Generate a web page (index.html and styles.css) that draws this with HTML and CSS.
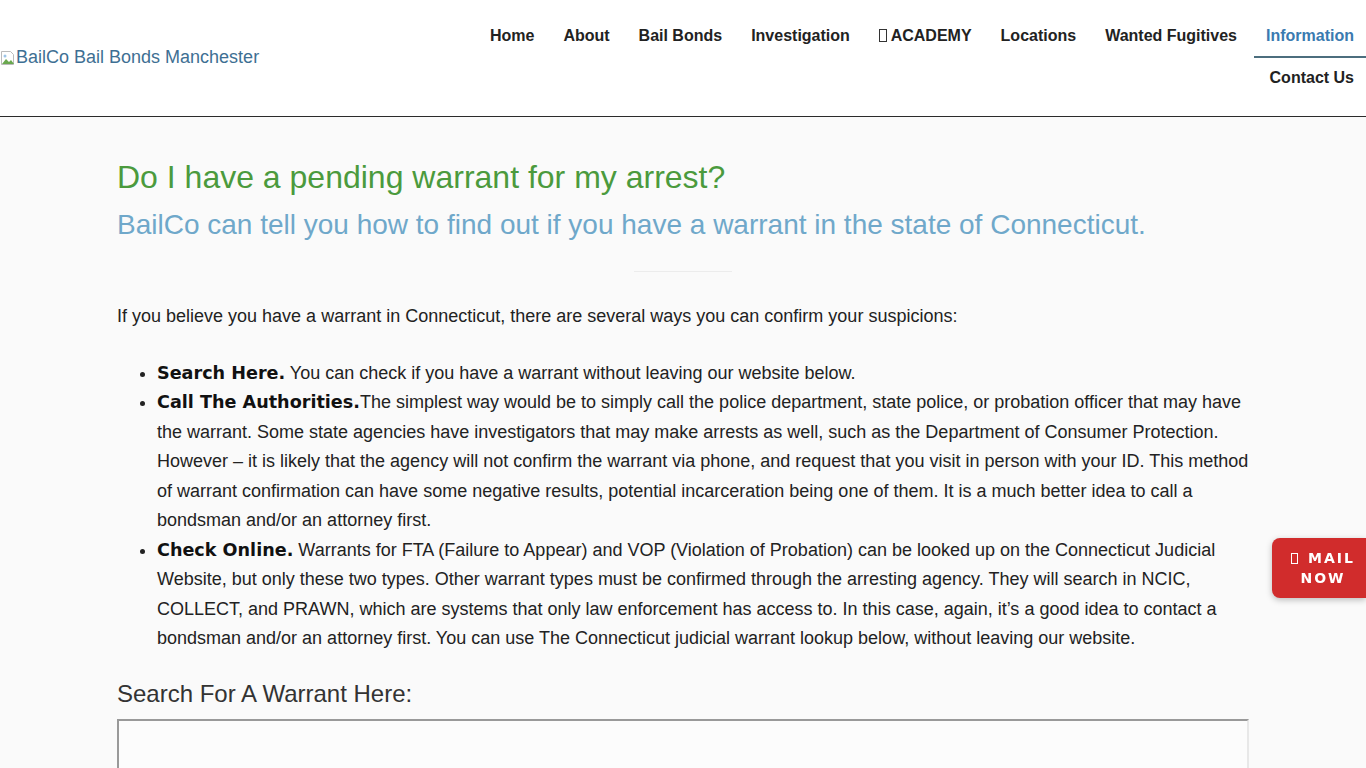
FILE: index.html
```html
<!DOCTYPE html>
<html lang="en">
<head>
<meta charset="utf-8">
<title>Do I have a pending warrant for my arrest? - BailCo</title>
<link rel="stylesheet" href="styles.css">
</head>
<body>
<header class="site-header">
  <a class="logo" href="#">
    <span class="broken-img"><svg width="16" height="16" viewBox="0 0 16 16"><path d="M1.5 1.5h9l3 3v10h-12z" fill="#fff" stroke="#bbb"/><path d="M2 14l4-5 3 3 2-2 3 4z" fill="#6aa84f"/><circle cx="5" cy="6" r="1.5" fill="#9ec5e8"/></svg></span><span class="logo-alt">BailCo Bail Bonds Manchester</span>
  </a>
  <nav class="main-nav">
    <a class="nav-item" href="#">Home</a>
    <a class="nav-item" href="#">About</a>
    <a class="nav-item" href="#">Bail Bonds</a>
    <a class="nav-item" href="#">Investigation</a>
    <a class="nav-item" href="#"><span class="tofu"></span> ACADEMY</a>
    <a class="nav-item" href="#">Locations</a>
    <a class="nav-item" href="#">Wanted Fugitives</a>
    <a class="nav-item active" href="#">Information</a>
    <a class="nav-item" href="#">Contact Us</a>
  </nav>
</header>
<main class="content">
  <h1 class="title">Do I have a pending warrant for my arrest?</h1>
  <h2 class="subtitle">BailCo can tell you how to find out if you have a warrant in the state of Connecticut.</h2>
  <hr class="divider">
  <p class="intro">If you believe you have a warrant in Connecticut, there are several ways you can confirm your suspicions:</p>
  <ul class="ways">
    <li><strong>Search Here.</strong> You can check if you have a warrant without leaving our website below.</li>
    <li><strong>Call The Authorities.</strong>The simplest way would be to simply call the police department, state police, or probation officer that may have the warrant. Some state agencies have investigators that may make arrests as well, such as the Department of Consumer Protection. However – it is likely that the agency will not confirm the warrant via phone, and request that you visit in person with your ID. This method of warrant confirmation can have some negative results, potential incarceration being one of them. It is a much better idea to call a bondsman and/or an attorney first.</li>
    <li><strong>Check Online.</strong> Warrants for FTA (Failure to Appear) and VOP (Violation of Probation) can be looked up on the Connecticut Judicial Website, but only these two types. Other warrant types must be confirmed through the arresting agency. They will search in NCIC, COLLECT, and PRAWN, which are systems that only law enforcement has access to. In this case, again, it’s a good idea to contact a bondsman and/or an attorney first. You can use The Connecticut judicial warrant lookup below, without leaving our website.</li>
  </ul>
  <h3 class="search-title">Search For A Warrant Here:</h3>
  <div class="frame"></div>
</main>
<a class="mail-now" href="#"><span class="tofu tofu-white"></span>MAIL<br>NOW</a>
</body>
</html>
```
FILE: styles.css
```css
* { box-sizing: border-box; }
html, body { margin: 0; padding: 0; }
body {
  background: #fafafa;
  font-family: "Liberation Sans", Arial, sans-serif;
  color: #222;
  overflow: hidden;
}
a { text-decoration: none; }

.site-header {
  background: #fff;
  height: 117px;
  border-bottom: 1px solid #2b2b2b;
  display: flex;
  justify-content: space-between;
  align-items: flex-start;
}
.logo {
  align-self: center;
  display: flex;
  align-items: flex-end;
  color: #3e6f93;
  font-size: 18px;
  line-height: 20px;
  margin-top: -2px;
}
.broken-img { display: inline-flex; width: 16px; height: 16px; margin-bottom: 1px; }

.main-nav {
  margin-top: 14px;
  width: 900px;
  display: flex;
  flex-wrap: wrap;
  justify-content: flex-end;
  column-gap: 5px;
}
.nav-item {
  display: block;
  padding: 0 12px;
  height: 42px;
  line-height: 44px;
  font-size: 16px;
  font-weight: bold;
  color: #222;
  white-space: nowrap;
}
.nav-item.active {
  color: #3a7ab0;
  border-bottom: 2px solid #4c6e7e;
  height: 44px;
  margin-bottom: -2px;
}
.tofu {
  display: inline-block;
  width: 8px;
  height: 13px;
  border: 1px solid #333;
  vertical-align: -1px;
}
.tofu-white {
  border-color: #fff;
  width: 7px;
  height: 11px;
  margin-right: 10px;
}

.content {
  width: 1132px;
  margin: 0 auto;
  padding-top: 40px;
}
.title {
  margin: 0;
  font-weight: normal;
  font-size: 32px;
  line-height: 40px;
  color: #4b9a3d;
}
.subtitle {
  margin: 10px 0 0;
  font-weight: normal;
  font-size: 28px;
  line-height: 36px;
  color: #6fa8ca;
}
.divider {
  width: 98px;
  margin: 28px auto 0;
  border: 0;
  border-top: 1px solid #ececec;
  height: 0;
}
.intro {
  margin: 30px 0 0;
  font-size: 18px;
  line-height: 29.5px;
}
.ways {
  margin: 27px -4px 0 0;
  padding-left: 40px;
  font-size: 18px;
  line-height: 29.5px;
}
.ways strong {
  font-family: "DejaVu Sans", Verdana, sans-serif;
  font-size: 17.6px;
  font-weight: bold;
  color: #111;
}
.search-title {
  margin: 24px 0 0;
  font-weight: normal;
  font-size: 24px;
  line-height: 31px;
  color: #333;
}
.frame {
  margin-top: 10px;
  height: 120px;
  border: 2px solid #999;
  border-right-color: #e8e8e8;
  border-bottom-color: #e8e8e8;
  background: #fcfcfc;
}

.mail-now {
  position: fixed;
  right: 0;
  top: 538px;
  width: 94px;
  height: 60px;
  background: #d12c2c;
  border-radius: 8px 0 0 8px;
  box-shadow: 0 2px 6px rgba(0,0,0,0.25);
  color: #fff;
  font-family: "DejaVu Sans", Verdana, sans-serif;
  font-weight: bold;
  font-size: 14px;
  letter-spacing: 2px;
  line-height: 20px;
  text-align: center;
  padding: 10px 0 0 8px;
}
```
